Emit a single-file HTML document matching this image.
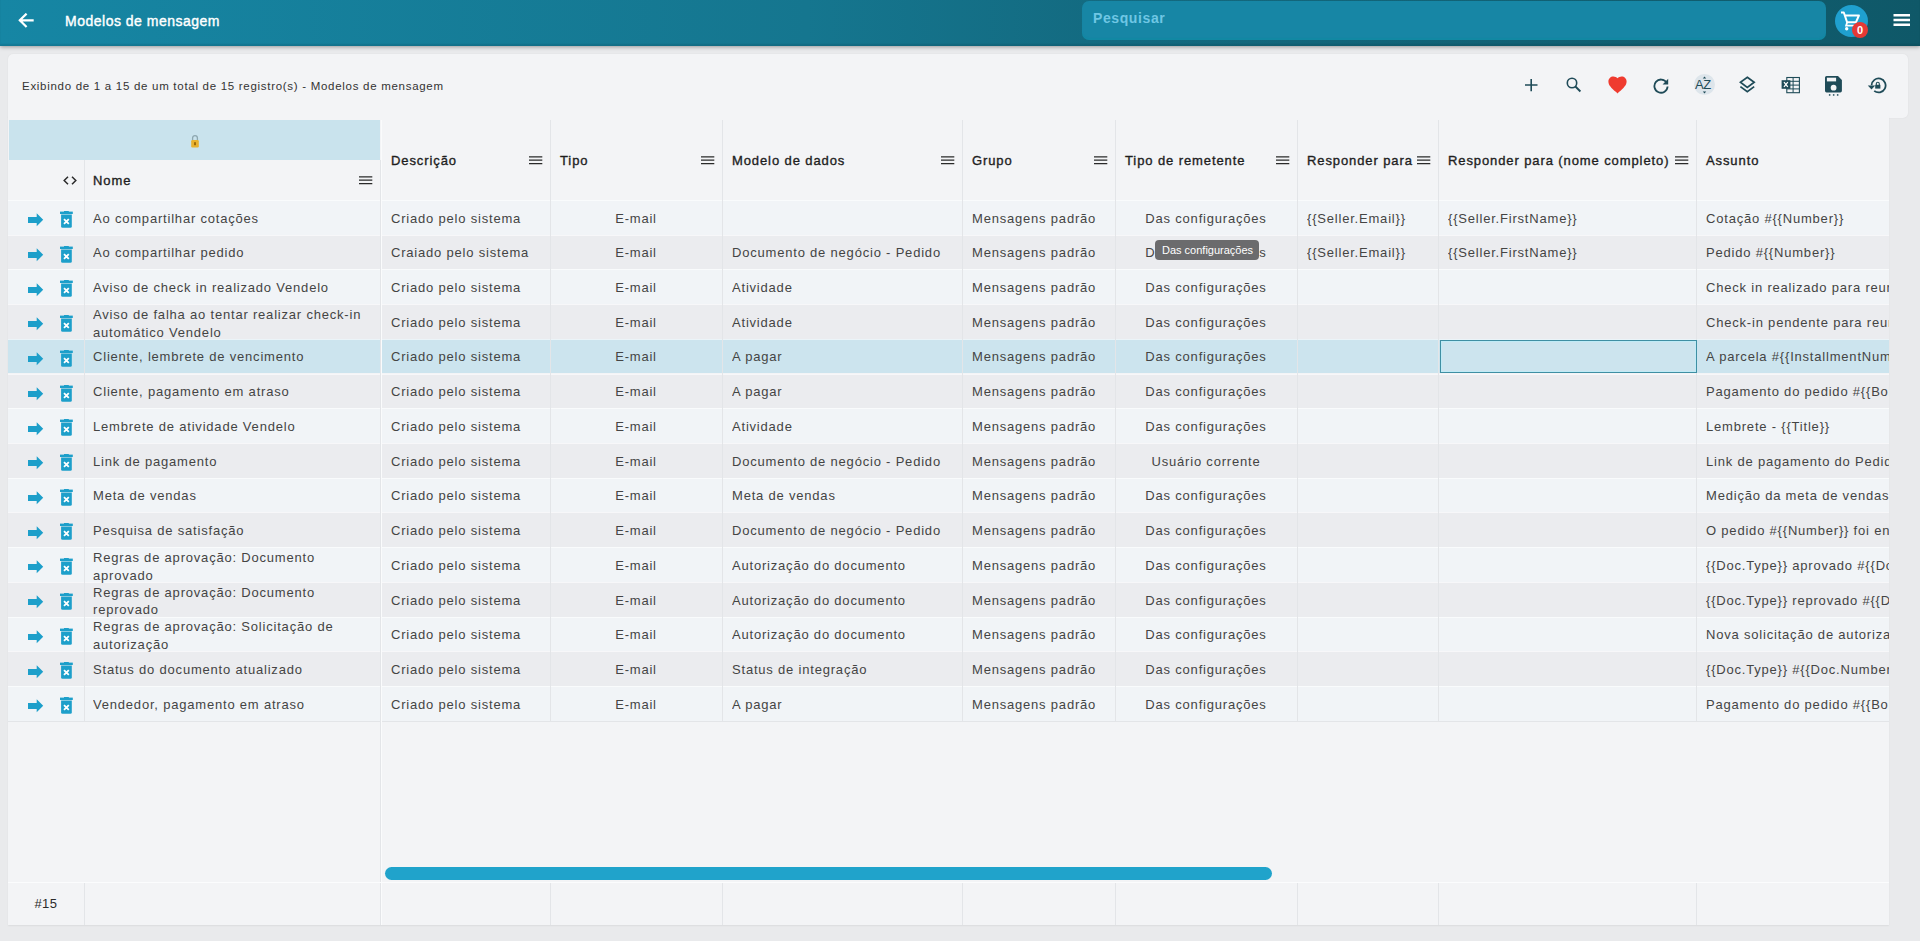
<!DOCTYPE html>
<html><head><meta charset="utf-8"><title>Modelos de mensagem</title>
<style>
*{box-sizing:border-box}
html,body{margin:0;padding:0}
body{width:1920px;height:941px;overflow:hidden;position:relative;background:#e9eaec;font-family:"Liberation Sans",sans-serif;color:#3a3a3a}
.abs{position:absolute}
.ic{position:absolute;display:block}
#hdr{position:absolute;left:0;top:0;width:1920px;height:46px;background:linear-gradient(90deg,#1686a4 0%,#15768f 42%,#136a80 58%,#0f5868 100%);box-shadow:0 1px 4px rgba(0,0,0,.35),inset 0 -2px 1.5px rgba(0,30,40,.12)}
#title{position:absolute;left:65px;top:13px;font-size:14px;line-height:16px;color:#fff;letter-spacing:0.5px;white-space:nowrap;-webkit-text-stroke:0.4px #fff}
#search{position:absolute;left:1082px;top:1px;width:744px;height:39px;border-radius:7px;background:#1786a5;box-shadow:inset 0 -2px 1px rgba(10,140,160,.35)}
#search span{position:absolute;left:11px;top:9px;font-weight:bold;font-size:14px;line-height:16px;color:#6fc6e4;letter-spacing:0.6px}
#card{position:absolute;left:8px;top:54px;width:1900px;height:64px;background:#f3f4f6;border-radius:5px 5px 5px 0;box-shadow:0 0 1.5px rgba(0,0,0,.08)}
#info{position:absolute;left:22px;top:78.6px;font-size:11.5px;line-height:14px;letter-spacing:0.71px;color:#333;white-space:nowrap}
#grid{position:absolute;left:8px;top:116px;width:1881px;height:809px;background:#f3f4f6;overflow:hidden;box-shadow:0 1px 1.5px rgba(0,0,0,.06)}
.t{position:absolute;white-space:nowrap;font-size:13px;letter-spacing:0.8px;color:#444;line-height:34.73px;overflow:hidden;padding-top:1.7px}
.h{position:absolute;white-space:nowrap;font-size:13px;letter-spacing:0.9px;color:#1e1e1e;line-height:16px;-webkit-text-stroke:0.35px #1e1e1e}
.row{position:absolute;left:8px;width:1881px;height:34.73px}
.vl{position:absolute;width:1px;background:#e3e5e8}
</style></head><body>

<div id="hdr">
<svg class="ic" style="left:18px;top:13px" width="16" height="15" viewBox="0 0 16 15"><path d="M14.6 7.3H2.2M7.8 1.4L1.8 7.3l6 6" stroke="#fff" stroke-width="2.2" fill="none" stroke-linecap="square"/></svg>
<div id="title">Modelos de mensagem</div>
<div id="search"><span>Pesquisar</span></div>
<div class="abs" style="left:1835px;top:5px;width:33px;height:32px;border-radius:50%;background:#1fa0cf"></div>
<svg class="ic" style="left:1840px;top:11px" width="22" height="21" viewBox="0 0 22 21"><path d="M1 1.5h2.8l3.3 9.8h8.8l3-6.8H5.2" stroke="#fff" stroke-width="2" fill="none" stroke-linejoin="round"/><path d="M7.2 11.3l-1.1 3.4h9.5" stroke="#fff" stroke-width="1.8" fill="none"/><circle cx="6.7" cy="17.8" r="1.7" fill="#fff"/></svg>
<div class="abs" style="left:1852px;top:22px;width:16px;height:16px;border-radius:50%;background:#e53935;color:#fff;font-size:11px;font-weight:bold;line-height:16px;text-align:center">0</div>
<svg class="ic" style="left:1893px;top:13px" width="18" height="14" viewBox="0 0 18 14"><path d="M0.5 2.2h16.5M0.5 7h16.5M0.5 11.7h16.5" stroke="#fff" stroke-width="2.4"/></svg>
</div>
<div id="card"></div>
<div id="info">Exibindo de 1 a 15 de um total de 15 registro(s) - Modelos de mensagem</div>
<svg class="ic" style="left:1524px;top:78px" width="14" height="14" viewBox="0 0 14 14"><path d="M7.2 1v12.3M1 7h12.5" stroke="#1f4b58" stroke-width="1.6"/></svg>
<svg class="ic" style="left:1565px;top:76px" width="18" height="18" viewBox="0 0 18 18"><circle cx="7" cy="7" r="4.7" stroke="#1f4b58" stroke-width="1.6" fill="none"/><path d="M10.4 10.5l5 5" stroke="#1f4b58" stroke-width="1.8"/></svg>
<svg class="ic" style="left:1608px;top:76px" width="19" height="18" viewBox="0 0 19 18"><path d="M9.5 17.4L8.1 16.1C3.3 11.8 0.4 9.1 0.4 5.4 0.4 2.5 2.6 0.4 5.4 0.4c1.6 0 3.1.7 4.1 1.9 1-1.2 2.5-1.9 4.1-1.9 2.8 0 5 2.1 5 5 0 3.7-2.9 6.4-7.7 10.7z" fill="#ef3b2f"/></svg>
<svg class="ic" style="left:1653px;top:77px" width="17" height="17" viewBox="0 0 17 17"><path d="M13.6 5.6A6.6 6.6 0 1 0 14.6 9.5" stroke="#1f4b58" stroke-width="1.8" fill="none"/><path d="M15.2 1.8v5.6H9.6z" fill="#1f4b58"/></svg>
<div class="abs" style="left:1693.5px;top:74px;width:21px;height:21px;border-radius:50%;background:#dde5eb"></div>
<div class="abs" style="left:1695px;top:79px;font-size:13px;line-height:12px;color:#1f4b58;letter-spacing:-0.3px">AZ</div>
<svg class="ic" style="left:1702px;top:75.5px" width="5" height="18" viewBox="0 0 5 18"><path d="M2.5 0.5L4.2 2.6H0.8z M2.5 17.5L4.2 15.4H0.8z" fill="#1f4b58"/></svg>
<svg class="ic" style="left:1739px;top:76px" width="17" height="18" viewBox="0 0 17 18"><path d="M8.3 1.2L15.2 6.3 8.3 11.4 1.4 6.3z" stroke="#1f4b58" stroke-width="1.7" fill="none" stroke-linejoin="miter"/><path d="M1.4 10.6L8.3 15.8 15.2 10.6" stroke="#1f4b58" stroke-width="1.7" fill="none"/></svg>
<svg class="ic" style="left:1781px;top:76px" width="20" height="18" viewBox="0 0 20 18"><rect x="5.8" y="1.5" width="12.6" height="15.2" stroke="#1f4b58" stroke-width="1.1" fill="none"/><path d="M5.8 5.3h12.6M5.8 9.1h12.6M5.8 12.9h12.6M12.1 1.5v15.2" stroke="#1f4b58" stroke-width="1"/><rect x="0.6" y="4.2" width="8.8" height="8.6" fill="#1f4b58"/><path d="M3 6.2l3.8 4.6M6.8 6.2L3 10.8" stroke="#fff" stroke-width="1.3"/></svg>
<svg class="ic" style="left:1825px;top:75px" width="18" height="22" viewBox="0 0 18 22"><path d="M1.6 1h11.4l3.9 3.9v10.9a1.6 1.6 0 0 1-1.6 1.6H1.6A1.6 1.6 0 0 1 0 15.8V2.6A1.6 1.6 0 0 1 1.6 1z" fill="#1f4b58"/><rect x="1.9" y="2.7" width="9.2" height="3.7" fill="#f3f4f6"/><circle cx="8.6" cy="12.7" r="2.9" fill="#f3f4f6"/><rect x="3.9" y="19.2" width="1.5" height="1.5" fill="#1f4b58"/><rect x="7.9" y="19.2" width="1.5" height="1.5" fill="#1f4b58"/><rect x="11.9" y="19.2" width="1.5" height="1.5" fill="#1f4b58"/></svg>
<svg class="ic" style="left:1866px;top:76px" width="21" height="18" viewBox="0 0 21 18"><path d="M5.6 9.2A7 7 0 1 1 8.2 14.9" stroke="#1f4b58" stroke-width="1.8" fill="none"/><path d="M1.8 9.6h7.4L5.5 13.4z" fill="#1f4b58"/><rect x="9.2" y="8.8" width="5.2" height="3.8" fill="#1f4b58"/><path d="M10.3 8.9V7.8a1.5 1.5 0 0 1 3 0v1.1" stroke="#1f4b58" stroke-width="1.1" fill="none"/></svg>
<div id="grid"></div>
<div class="abs" style="left:9px;top:120px;width:371px;height:40px;background:#c9e3ed"></div>
<svg class="ic" style="left:190px;top:134px" width="10" height="14" viewBox="0 0 10 14"><path d="M2.6 6.2V4a2.4 2.4 0 0 1 4.8 0v2.2" stroke="#8ea8b0" stroke-width="1.3" fill="none"/><rect x="1.2" y="6" width="7.6" height="7.4" rx="1.2" fill="#e9b22f"/><rect x="4.2" y="8.2" width="1.6" height="3" fill="#8a5a00"/></svg>
<div class="row" style="top:199.90px;background:#f1f4f7;border-top:1px solid rgba(255,255,255,.6)"></div>
<div class="row" style="top:234.62px;background:#ebecef;border-top:1px solid rgba(255,255,255,.6)"></div>
<div class="row" style="top:269.34px;background:#f1f4f7;border-top:1px solid rgba(255,255,255,.6)"></div>
<div class="row" style="top:304.06px;background:#ebecef;border-top:1px solid rgba(255,255,255,.6)"></div>
<div class="row" style="top:338.78px;background:#cce4ee;border-top:1px solid rgba(255,255,255,.6)"></div>
<div class="row" style="top:373.50px;background:#ebecef;border-top:1px solid rgba(255,255,255,.6)"></div>
<div class="row" style="top:408.22px;background:#f1f4f7;border-top:1px solid rgba(255,255,255,.6)"></div>
<div class="row" style="top:442.94px;background:#ebecef;border-top:1px solid rgba(255,255,255,.6)"></div>
<div class="row" style="top:477.66px;background:#f1f4f7;border-top:1px solid rgba(255,255,255,.6)"></div>
<div class="row" style="top:512.38px;background:#ebecef;border-top:1px solid rgba(255,255,255,.6)"></div>
<div class="row" style="top:547.10px;background:#f1f4f7;border-top:1px solid rgba(255,255,255,.6)"></div>
<div class="row" style="top:581.82px;background:#ebecef;border-top:1px solid rgba(255,255,255,.6)"></div>
<div class="row" style="top:616.54px;background:#f1f4f7;border-top:1px solid rgba(255,255,255,.6)"></div>
<div class="row" style="top:651.26px;background:#ebecef;border-top:1px solid rgba(255,255,255,.6)"></div>
<div class="row" style="top:685.98px;background:#f1f4f7;border-top:1px solid rgba(255,255,255,.6)"></div>
<div class="abs" style="left:8px;top:720.70px;width:1881px;height:1px;background:#e3e5e8"></div>
<div class="vl" style="left:84px;top:160px;height:560.70px"></div>
<div class="vl" style="left:380px;top:160px;height:765px"></div><div class="vl" style="left:381px;top:120px;height:805px;background:#fafbfc"></div>
<div class="vl" style="left:550px;top:120px;height:600.70px"></div>
<div class="vl" style="left:550px;top:882px;height:43px"></div>
<div class="vl" style="left:722px;top:120px;height:600.70px"></div>
<div class="vl" style="left:722px;top:882px;height:43px"></div>
<div class="vl" style="left:962px;top:120px;height:600.70px"></div>
<div class="vl" style="left:962px;top:882px;height:43px"></div>
<div class="vl" style="left:1115px;top:120px;height:600.70px"></div>
<div class="vl" style="left:1115px;top:882px;height:43px"></div>
<div class="vl" style="left:1297px;top:120px;height:600.70px"></div>
<div class="vl" style="left:1297px;top:882px;height:43px"></div>
<div class="vl" style="left:1438px;top:120px;height:600.70px"></div>
<div class="vl" style="left:1438px;top:882px;height:43px"></div>
<div class="vl" style="left:1696px;top:120px;height:600.70px"></div>
<div class="vl" style="left:1696px;top:882px;height:43px"></div>
<div class="vl" style="left:84px;top:882px;height:43px"></div>
<svg class="ic" style="left:62.5px;top:176px" width="14" height="9" viewBox="0 0 14 9"><path d="M5 0.8L1.2 4.5 5 8.2M9 0.8l3.8 3.7L9 8.2" stroke="#2a2a2a" stroke-width="1.5" fill="none"/></svg>
<div class="h" style="left:93px;top:173px">Nome</div>
<svg class="ic" style="left:359.3px;top:175.5px" width="14" height="9" viewBox="0 0 14 9"><path d="M0 0.8h13.3M0 4.2h13.3M0 7.6h13.3" stroke="#2a2a2a" stroke-width="1.3"/></svg>
<div class="h" style="left:391px;top:153px">Descrição</div>
<svg class="ic" style="left:528.7px;top:155.5px" width="14" height="9" viewBox="0 0 14 9"><path d="M0 0.8h13.3M0 4.2h13.3M0 7.6h13.3" stroke="#2a2a2a" stroke-width="1.3"/></svg>
<div class="h" style="left:560px;top:153px">Tipo</div>
<svg class="ic" style="left:700.7px;top:155.5px" width="14" height="9" viewBox="0 0 14 9"><path d="M0 0.8h13.3M0 4.2h13.3M0 7.6h13.3" stroke="#2a2a2a" stroke-width="1.3"/></svg>
<div class="h" style="left:732px;top:153px">Modelo de dados</div>
<svg class="ic" style="left:940.7px;top:155.5px" width="14" height="9" viewBox="0 0 14 9"><path d="M0 0.8h13.3M0 4.2h13.3M0 7.6h13.3" stroke="#2a2a2a" stroke-width="1.3"/></svg>
<div class="h" style="left:972px;top:153px">Grupo</div>
<svg class="ic" style="left:1093.7px;top:155.5px" width="14" height="9" viewBox="0 0 14 9"><path d="M0 0.8h13.3M0 4.2h13.3M0 7.6h13.3" stroke="#2a2a2a" stroke-width="1.3"/></svg>
<div class="h" style="left:1125px;top:153px">Tipo de remetente</div>
<svg class="ic" style="left:1275.7px;top:155.5px" width="14" height="9" viewBox="0 0 14 9"><path d="M0 0.8h13.3M0 4.2h13.3M0 7.6h13.3" stroke="#2a2a2a" stroke-width="1.3"/></svg>
<div class="h" style="left:1307px;top:153px">Responder para</div>
<svg class="ic" style="left:1416.7px;top:155.5px" width="14" height="9" viewBox="0 0 14 9"><path d="M0 0.8h13.3M0 4.2h13.3M0 7.6h13.3" stroke="#2a2a2a" stroke-width="1.3"/></svg>
<div class="h" style="left:1448px;top:153px">Responder para (nome completo)</div>
<svg class="ic" style="left:1674.7px;top:155.5px" width="14" height="9" viewBox="0 0 14 9"><path d="M0 0.8h13.3M0 4.2h13.3M0 7.6h13.3" stroke="#2a2a2a" stroke-width="1.3"/></svg>
<div class="h" style="left:1706px;top:153px">Assunto</div>
<svg class="ic" style="left:27.5px;top:213.20000000000002px" width="16" height="14" viewBox="0 0 16 14"><path d="M0 3.9h8.7V0.3L15.2 6.8l-6.5 6.5V9.9H0z" fill="#1d9fca"/></svg>
<svg class="ic" style="left:60px;top:211.0px" width="13" height="17" viewBox="0 0 13 17"><rect x="0" y="0.6" width="12.8" height="2.4" fill="#1d9fca"/><rect x="4" y="0" width="4.8" height="1.5" fill="#1d9fca"/><path d="M1.1 3.6h10.7v11.8a1.4 1.4 0 0 1-1.4 1.4H2.5a1.4 1.4 0 0 1-1.4-1.4z" fill="#1d9fca"/><path d="M4 8.1l4.8 4.8M8.8 8.1l-4.8 4.8" stroke="#fff" stroke-width="1.8"/></svg>
<div class="t" style="left:93px;top:199.90px;width:280px">Ao compartilhar cotações</div>
<div class="t" style="left:391px;top:199.90px">Criado pelo sistema</div>
<div class="t" style="left:550px;top:199.90px;width:172px;text-align:center">E-mail</div>
<div class="t" style="left:972px;top:199.90px">Mensagens padrão</div>
<div class="t" style="left:1115px;top:199.90px;width:182px;text-align:center">Das configurações</div>
<div class="t" style="left:1307px;top:199.90px">{{Seller.Email}}</div>
<div class="t" style="left:1448px;top:199.90px">{{Seller.FirstName}}</div>
<div class="t" style="left:1706px;top:199.90px;width:183px">Cotação #{{Number}}</div>
<svg class="ic" style="left:27.5px;top:247.92000000000002px" width="16" height="14" viewBox="0 0 16 14"><path d="M0 3.9h8.7V0.3L15.2 6.8l-6.5 6.5V9.9H0z" fill="#1d9fca"/></svg>
<svg class="ic" style="left:60px;top:245.72px" width="13" height="17" viewBox="0 0 13 17"><rect x="0" y="0.6" width="12.8" height="2.4" fill="#1d9fca"/><rect x="4" y="0" width="4.8" height="1.5" fill="#1d9fca"/><path d="M1.1 3.6h10.7v11.8a1.4 1.4 0 0 1-1.4 1.4H2.5a1.4 1.4 0 0 1-1.4-1.4z" fill="#1d9fca"/><path d="M4 8.1l4.8 4.8M8.8 8.1l-4.8 4.8" stroke="#fff" stroke-width="1.8"/></svg>
<div class="t" style="left:93px;top:234.62px;width:280px">Ao compartilhar pedido</div>
<div class="t" style="left:391px;top:234.62px">Craiado pelo sistema</div>
<div class="t" style="left:550px;top:234.62px;width:172px;text-align:center">E-mail</div>
<div class="t" style="left:732px;top:234.62px">Documento de negócio - Pedido</div>
<div class="t" style="left:972px;top:234.62px">Mensagens padrão</div>
<div class="t" style="left:1115px;top:234.62px;width:182px;text-align:center">Das configurações</div>
<div class="t" style="left:1307px;top:234.62px">{{Seller.Email}}</div>
<div class="t" style="left:1448px;top:234.62px">{{Seller.FirstName}}</div>
<div class="t" style="left:1706px;top:234.62px;width:183px">Pedido #{{Number}}</div>
<svg class="ic" style="left:27.5px;top:282.64000000000004px" width="16" height="14" viewBox="0 0 16 14"><path d="M0 3.9h8.7V0.3L15.2 6.8l-6.5 6.5V9.9H0z" fill="#1d9fca"/></svg>
<svg class="ic" style="left:60px;top:280.44000000000005px" width="13" height="17" viewBox="0 0 13 17"><rect x="0" y="0.6" width="12.8" height="2.4" fill="#1d9fca"/><rect x="4" y="0" width="4.8" height="1.5" fill="#1d9fca"/><path d="M1.1 3.6h10.7v11.8a1.4 1.4 0 0 1-1.4 1.4H2.5a1.4 1.4 0 0 1-1.4-1.4z" fill="#1d9fca"/><path d="M4 8.1l4.8 4.8M8.8 8.1l-4.8 4.8" stroke="#fff" stroke-width="1.8"/></svg>
<div class="t" style="left:93px;top:269.34px;width:280px">Aviso de check in realizado Vendelo</div>
<div class="t" style="left:391px;top:269.34px">Criado pelo sistema</div>
<div class="t" style="left:550px;top:269.34px;width:172px;text-align:center">E-mail</div>
<div class="t" style="left:732px;top:269.34px">Atividade</div>
<div class="t" style="left:972px;top:269.34px">Mensagens padrão</div>
<div class="t" style="left:1115px;top:269.34px;width:182px;text-align:center">Das configurações</div>
<div class="t" style="left:1706px;top:269.34px;width:183px">Check in realizado para reunião</div>
<svg class="ic" style="left:27.5px;top:317.36px" width="16" height="14" viewBox="0 0 16 14"><path d="M0 3.9h8.7V0.3L15.2 6.8l-6.5 6.5V9.9H0z" fill="#1d9fca"/></svg>
<svg class="ic" style="left:60px;top:315.16px" width="13" height="17" viewBox="0 0 13 17"><rect x="0" y="0.6" width="12.8" height="2.4" fill="#1d9fca"/><rect x="4" y="0" width="4.8" height="1.5" fill="#1d9fca"/><path d="M1.1 3.6h10.7v11.8a1.4 1.4 0 0 1-1.4 1.4H2.5a1.4 1.4 0 0 1-1.4-1.4z" fill="#1d9fca"/><path d="M4 8.1l4.8 4.8M8.8 8.1l-4.8 4.8" stroke="#fff" stroke-width="1.8"/></svg>
<div class="t" style="left:93px;top:305.96px;width:280px;line-height:17.7px;padding-top:0">Aviso de falha ao tentar realizar check-in<br>automático Vendelo</div>
<div class="t" style="left:391px;top:304.06px">Criado pelo sistema</div>
<div class="t" style="left:550px;top:304.06px;width:172px;text-align:center">E-mail</div>
<div class="t" style="left:732px;top:304.06px">Atividade</div>
<div class="t" style="left:972px;top:304.06px">Mensagens padrão</div>
<div class="t" style="left:1115px;top:304.06px;width:182px;text-align:center">Das configurações</div>
<div class="t" style="left:1706px;top:304.06px;width:183px">Check-in pendente para reunião</div>
<svg class="ic" style="left:27.5px;top:352.08px" width="16" height="14" viewBox="0 0 16 14"><path d="M0 3.9h8.7V0.3L15.2 6.8l-6.5 6.5V9.9H0z" fill="#1d9fca"/></svg>
<svg class="ic" style="left:60px;top:349.88px" width="13" height="17" viewBox="0 0 13 17"><rect x="0" y="0.6" width="12.8" height="2.4" fill="#1d9fca"/><rect x="4" y="0" width="4.8" height="1.5" fill="#1d9fca"/><path d="M1.1 3.6h10.7v11.8a1.4 1.4 0 0 1-1.4 1.4H2.5a1.4 1.4 0 0 1-1.4-1.4z" fill="#1d9fca"/><path d="M4 8.1l4.8 4.8M8.8 8.1l-4.8 4.8" stroke="#fff" stroke-width="1.8"/></svg>
<div class="t" style="left:93px;top:338.78px;width:280px">Cliente, lembrete de vencimento</div>
<div class="t" style="left:391px;top:338.78px">Criado pelo sistema</div>
<div class="t" style="left:550px;top:338.78px;width:172px;text-align:center">E-mail</div>
<div class="t" style="left:732px;top:338.78px">A pagar</div>
<div class="t" style="left:972px;top:338.78px">Mensagens padrão</div>
<div class="t" style="left:1115px;top:338.78px;width:182px;text-align:center">Das configurações</div>
<div class="t" style="left:1706px;top:338.78px;width:183px">A parcela #{{InstallmentNumber}}</div>
<svg class="ic" style="left:27.5px;top:386.8px" width="16" height="14" viewBox="0 0 16 14"><path d="M0 3.9h8.7V0.3L15.2 6.8l-6.5 6.5V9.9H0z" fill="#1d9fca"/></svg>
<svg class="ic" style="left:60px;top:384.6px" width="13" height="17" viewBox="0 0 13 17"><rect x="0" y="0.6" width="12.8" height="2.4" fill="#1d9fca"/><rect x="4" y="0" width="4.8" height="1.5" fill="#1d9fca"/><path d="M1.1 3.6h10.7v11.8a1.4 1.4 0 0 1-1.4 1.4H2.5a1.4 1.4 0 0 1-1.4-1.4z" fill="#1d9fca"/><path d="M4 8.1l4.8 4.8M8.8 8.1l-4.8 4.8" stroke="#fff" stroke-width="1.8"/></svg>
<div class="t" style="left:93px;top:373.50px;width:280px">Cliente, pagamento em atraso</div>
<div class="t" style="left:391px;top:373.50px">Criado pelo sistema</div>
<div class="t" style="left:550px;top:373.50px;width:172px;text-align:center">E-mail</div>
<div class="t" style="left:732px;top:373.50px">A pagar</div>
<div class="t" style="left:972px;top:373.50px">Mensagens padrão</div>
<div class="t" style="left:1115px;top:373.50px;width:182px;text-align:center">Das configurações</div>
<div class="t" style="left:1706px;top:373.50px;width:183px">Pagamento do pedido #{{BoletoNumber}}</div>
<svg class="ic" style="left:27.5px;top:421.52000000000004px" width="16" height="14" viewBox="0 0 16 14"><path d="M0 3.9h8.7V0.3L15.2 6.8l-6.5 6.5V9.9H0z" fill="#1d9fca"/></svg>
<svg class="ic" style="left:60px;top:419.32000000000005px" width="13" height="17" viewBox="0 0 13 17"><rect x="0" y="0.6" width="12.8" height="2.4" fill="#1d9fca"/><rect x="4" y="0" width="4.8" height="1.5" fill="#1d9fca"/><path d="M1.1 3.6h10.7v11.8a1.4 1.4 0 0 1-1.4 1.4H2.5a1.4 1.4 0 0 1-1.4-1.4z" fill="#1d9fca"/><path d="M4 8.1l4.8 4.8M8.8 8.1l-4.8 4.8" stroke="#fff" stroke-width="1.8"/></svg>
<div class="t" style="left:93px;top:408.22px;width:280px">Lembrete de atividade Vendelo</div>
<div class="t" style="left:391px;top:408.22px">Criado pelo sistema</div>
<div class="t" style="left:550px;top:408.22px;width:172px;text-align:center">E-mail</div>
<div class="t" style="left:732px;top:408.22px">Atividade</div>
<div class="t" style="left:972px;top:408.22px">Mensagens padrão</div>
<div class="t" style="left:1115px;top:408.22px;width:182px;text-align:center">Das configurações</div>
<div class="t" style="left:1706px;top:408.22px;width:183px">Lembrete - {{Title}}</div>
<svg class="ic" style="left:27.5px;top:456.24px" width="16" height="14" viewBox="0 0 16 14"><path d="M0 3.9h8.7V0.3L15.2 6.8l-6.5 6.5V9.9H0z" fill="#1d9fca"/></svg>
<svg class="ic" style="left:60px;top:454.04px" width="13" height="17" viewBox="0 0 13 17"><rect x="0" y="0.6" width="12.8" height="2.4" fill="#1d9fca"/><rect x="4" y="0" width="4.8" height="1.5" fill="#1d9fca"/><path d="M1.1 3.6h10.7v11.8a1.4 1.4 0 0 1-1.4 1.4H2.5a1.4 1.4 0 0 1-1.4-1.4z" fill="#1d9fca"/><path d="M4 8.1l4.8 4.8M8.8 8.1l-4.8 4.8" stroke="#fff" stroke-width="1.8"/></svg>
<div class="t" style="left:93px;top:442.94px;width:280px">Link de pagamento</div>
<div class="t" style="left:391px;top:442.94px">Criado pelo sistema</div>
<div class="t" style="left:550px;top:442.94px;width:172px;text-align:center">E-mail</div>
<div class="t" style="left:732px;top:442.94px">Documento de negócio - Pedido</div>
<div class="t" style="left:972px;top:442.94px">Mensagens padrão</div>
<div class="t" style="left:1115px;top:442.94px;width:182px;text-align:center">Usuário corrente</div>
<div class="t" style="left:1706px;top:442.94px;width:183px">Link de pagamento do Pedido</div>
<svg class="ic" style="left:27.5px;top:490.96px" width="16" height="14" viewBox="0 0 16 14"><path d="M0 3.9h8.7V0.3L15.2 6.8l-6.5 6.5V9.9H0z" fill="#1d9fca"/></svg>
<svg class="ic" style="left:60px;top:488.76px" width="13" height="17" viewBox="0 0 13 17"><rect x="0" y="0.6" width="12.8" height="2.4" fill="#1d9fca"/><rect x="4" y="0" width="4.8" height="1.5" fill="#1d9fca"/><path d="M1.1 3.6h10.7v11.8a1.4 1.4 0 0 1-1.4 1.4H2.5a1.4 1.4 0 0 1-1.4-1.4z" fill="#1d9fca"/><path d="M4 8.1l4.8 4.8M8.8 8.1l-4.8 4.8" stroke="#fff" stroke-width="1.8"/></svg>
<div class="t" style="left:93px;top:477.66px;width:280px">Meta de vendas</div>
<div class="t" style="left:391px;top:477.66px">Criado pelo sistema</div>
<div class="t" style="left:550px;top:477.66px;width:172px;text-align:center">E-mail</div>
<div class="t" style="left:732px;top:477.66px">Meta de vendas</div>
<div class="t" style="left:972px;top:477.66px">Mensagens padrão</div>
<div class="t" style="left:1115px;top:477.66px;width:182px;text-align:center">Das configurações</div>
<div class="t" style="left:1706px;top:477.66px;width:183px">Medição da meta de vendas</div>
<svg class="ic" style="left:27.5px;top:525.68px" width="16" height="14" viewBox="0 0 16 14"><path d="M0 3.9h8.7V0.3L15.2 6.8l-6.5 6.5V9.9H0z" fill="#1d9fca"/></svg>
<svg class="ic" style="left:60px;top:523.48px" width="13" height="17" viewBox="0 0 13 17"><rect x="0" y="0.6" width="12.8" height="2.4" fill="#1d9fca"/><rect x="4" y="0" width="4.8" height="1.5" fill="#1d9fca"/><path d="M1.1 3.6h10.7v11.8a1.4 1.4 0 0 1-1.4 1.4H2.5a1.4 1.4 0 0 1-1.4-1.4z" fill="#1d9fca"/><path d="M4 8.1l4.8 4.8M8.8 8.1l-4.8 4.8" stroke="#fff" stroke-width="1.8"/></svg>
<div class="t" style="left:93px;top:512.38px;width:280px">Pesquisa de satisfação</div>
<div class="t" style="left:391px;top:512.38px">Criado pelo sistema</div>
<div class="t" style="left:550px;top:512.38px;width:172px;text-align:center">E-mail</div>
<div class="t" style="left:732px;top:512.38px">Documento de negócio - Pedido</div>
<div class="t" style="left:972px;top:512.38px">Mensagens padrão</div>
<div class="t" style="left:1115px;top:512.38px;width:182px;text-align:center">Das configurações</div>
<div class="t" style="left:1706px;top:512.38px;width:183px">O pedido #{{Number}} foi entregue</div>
<svg class="ic" style="left:27.5px;top:560.4px" width="16" height="14" viewBox="0 0 16 14"><path d="M0 3.9h8.7V0.3L15.2 6.8l-6.5 6.5V9.9H0z" fill="#1d9fca"/></svg>
<svg class="ic" style="left:60px;top:558.2px" width="13" height="17" viewBox="0 0 13 17"><rect x="0" y="0.6" width="12.8" height="2.4" fill="#1d9fca"/><rect x="4" y="0" width="4.8" height="1.5" fill="#1d9fca"/><path d="M1.1 3.6h10.7v11.8a1.4 1.4 0 0 1-1.4 1.4H2.5a1.4 1.4 0 0 1-1.4-1.4z" fill="#1d9fca"/><path d="M4 8.1l4.8 4.8M8.8 8.1l-4.8 4.8" stroke="#fff" stroke-width="1.8"/></svg>
<div class="t" style="left:93px;top:549.00px;width:280px;line-height:17.7px;padding-top:0">Regras de aprovação: Documento<br>aprovado</div>
<div class="t" style="left:391px;top:547.10px">Criado pelo sistema</div>
<div class="t" style="left:550px;top:547.10px;width:172px;text-align:center">E-mail</div>
<div class="t" style="left:732px;top:547.10px">Autorização do documento</div>
<div class="t" style="left:972px;top:547.10px">Mensagens padrão</div>
<div class="t" style="left:1115px;top:547.10px;width:182px;text-align:center">Das configurações</div>
<div class="t" style="left:1706px;top:547.10px;width:183px">{{Doc.Type}} aprovado #{{Doc.Number}}</div>
<svg class="ic" style="left:27.5px;top:595.1199999999999px" width="16" height="14" viewBox="0 0 16 14"><path d="M0 3.9h8.7V0.3L15.2 6.8l-6.5 6.5V9.9H0z" fill="#1d9fca"/></svg>
<svg class="ic" style="left:60px;top:592.92px" width="13" height="17" viewBox="0 0 13 17"><rect x="0" y="0.6" width="12.8" height="2.4" fill="#1d9fca"/><rect x="4" y="0" width="4.8" height="1.5" fill="#1d9fca"/><path d="M1.1 3.6h10.7v11.8a1.4 1.4 0 0 1-1.4 1.4H2.5a1.4 1.4 0 0 1-1.4-1.4z" fill="#1d9fca"/><path d="M4 8.1l4.8 4.8M8.8 8.1l-4.8 4.8" stroke="#fff" stroke-width="1.8"/></svg>
<div class="t" style="left:93px;top:583.72px;width:280px;line-height:17.7px;padding-top:0">Regras de aprovação: Documento<br>reprovado</div>
<div class="t" style="left:391px;top:581.82px">Criado pelo sistema</div>
<div class="t" style="left:550px;top:581.82px;width:172px;text-align:center">E-mail</div>
<div class="t" style="left:732px;top:581.82px">Autorização do documento</div>
<div class="t" style="left:972px;top:581.82px">Mensagens padrão</div>
<div class="t" style="left:1115px;top:581.82px;width:182px;text-align:center">Das configurações</div>
<div class="t" style="left:1706px;top:581.82px;width:183px">{{Doc.Type}} reprovado #{{Doc.Number}}</div>
<svg class="ic" style="left:27.5px;top:629.8399999999999px" width="16" height="14" viewBox="0 0 16 14"><path d="M0 3.9h8.7V0.3L15.2 6.8l-6.5 6.5V9.9H0z" fill="#1d9fca"/></svg>
<svg class="ic" style="left:60px;top:627.64px" width="13" height="17" viewBox="0 0 13 17"><rect x="0" y="0.6" width="12.8" height="2.4" fill="#1d9fca"/><rect x="4" y="0" width="4.8" height="1.5" fill="#1d9fca"/><path d="M1.1 3.6h10.7v11.8a1.4 1.4 0 0 1-1.4 1.4H2.5a1.4 1.4 0 0 1-1.4-1.4z" fill="#1d9fca"/><path d="M4 8.1l4.8 4.8M8.8 8.1l-4.8 4.8" stroke="#fff" stroke-width="1.8"/></svg>
<div class="t" style="left:93px;top:618.44px;width:280px;line-height:17.7px;padding-top:0">Regras de aprovação: Solicitação de<br>autorização</div>
<div class="t" style="left:391px;top:616.54px">Criado pelo sistema</div>
<div class="t" style="left:550px;top:616.54px;width:172px;text-align:center">E-mail</div>
<div class="t" style="left:732px;top:616.54px">Autorização do documento</div>
<div class="t" style="left:972px;top:616.54px">Mensagens padrão</div>
<div class="t" style="left:1115px;top:616.54px;width:182px;text-align:center">Das configurações</div>
<div class="t" style="left:1706px;top:616.54px;width:183px">Nova solicitação de autorização</div>
<svg class="ic" style="left:27.5px;top:664.56px" width="16" height="14" viewBox="0 0 16 14"><path d="M0 3.9h8.7V0.3L15.2 6.8l-6.5 6.5V9.9H0z" fill="#1d9fca"/></svg>
<svg class="ic" style="left:60px;top:662.36px" width="13" height="17" viewBox="0 0 13 17"><rect x="0" y="0.6" width="12.8" height="2.4" fill="#1d9fca"/><rect x="4" y="0" width="4.8" height="1.5" fill="#1d9fca"/><path d="M1.1 3.6h10.7v11.8a1.4 1.4 0 0 1-1.4 1.4H2.5a1.4 1.4 0 0 1-1.4-1.4z" fill="#1d9fca"/><path d="M4 8.1l4.8 4.8M8.8 8.1l-4.8 4.8" stroke="#fff" stroke-width="1.8"/></svg>
<div class="t" style="left:93px;top:651.26px;width:280px">Status do documento atualizado</div>
<div class="t" style="left:391px;top:651.26px">Criado pelo sistema</div>
<div class="t" style="left:550px;top:651.26px;width:172px;text-align:center">E-mail</div>
<div class="t" style="left:732px;top:651.26px">Status de integração</div>
<div class="t" style="left:972px;top:651.26px">Mensagens padrão</div>
<div class="t" style="left:1115px;top:651.26px;width:182px;text-align:center">Das configurações</div>
<div class="t" style="left:1706px;top:651.26px;width:183px">{{Doc.Type}} #{{Doc.Number}}</div>
<svg class="ic" style="left:27.5px;top:699.28px" width="16" height="14" viewBox="0 0 16 14"><path d="M0 3.9h8.7V0.3L15.2 6.8l-6.5 6.5V9.9H0z" fill="#1d9fca"/></svg>
<svg class="ic" style="left:60px;top:697.08px" width="13" height="17" viewBox="0 0 13 17"><rect x="0" y="0.6" width="12.8" height="2.4" fill="#1d9fca"/><rect x="4" y="0" width="4.8" height="1.5" fill="#1d9fca"/><path d="M1.1 3.6h10.7v11.8a1.4 1.4 0 0 1-1.4 1.4H2.5a1.4 1.4 0 0 1-1.4-1.4z" fill="#1d9fca"/><path d="M4 8.1l4.8 4.8M8.8 8.1l-4.8 4.8" stroke="#fff" stroke-width="1.8"/></svg>
<div class="t" style="left:93px;top:685.98px;width:280px">Vendedor, pagamento em atraso</div>
<div class="t" style="left:391px;top:685.98px">Criado pelo sistema</div>
<div class="t" style="left:550px;top:685.98px;width:172px;text-align:center">E-mail</div>
<div class="t" style="left:732px;top:685.98px">A pagar</div>
<div class="t" style="left:972px;top:685.98px">Mensagens padrão</div>
<div class="t" style="left:1115px;top:685.98px;width:182px;text-align:center">Das configurações</div>
<div class="t" style="left:1706px;top:685.98px;width:183px">Pagamento do pedido #{{BoletoNumber}}</div>
<div class="abs" style="left:1439.5px;top:340.08px;width:257.5px;height:33.4px;border:1px solid #3f8fa3;box-shadow:inset 0 0 0 1px rgba(185,238,250,.7)"></div>
<div class="abs" style="left:1155px;top:239.7px;width:104px;height:20.7px;border-radius:4px;background:#6b6b6d"></div>
<div class="abs" style="left:1162px;top:243px;font-size:11px;line-height:14px;color:#fff;white-space:nowrap">Das configurações</div>
<div class="abs" style="left:8px;top:881.5px;width:1881px;height:1px;background:#fbfcfd"></div>
<div class="abs" style="left:384.5px;top:867px;width:887px;height:13px;border-radius:6.5px;background:#20a3cb"></div>
<div class="abs" style="left:8px;top:882px;width:76px;height:43px;text-align:center;font-size:13px;line-height:43px;color:#2b2b2b;letter-spacing:0.5px">#15</div>
</body></html>
